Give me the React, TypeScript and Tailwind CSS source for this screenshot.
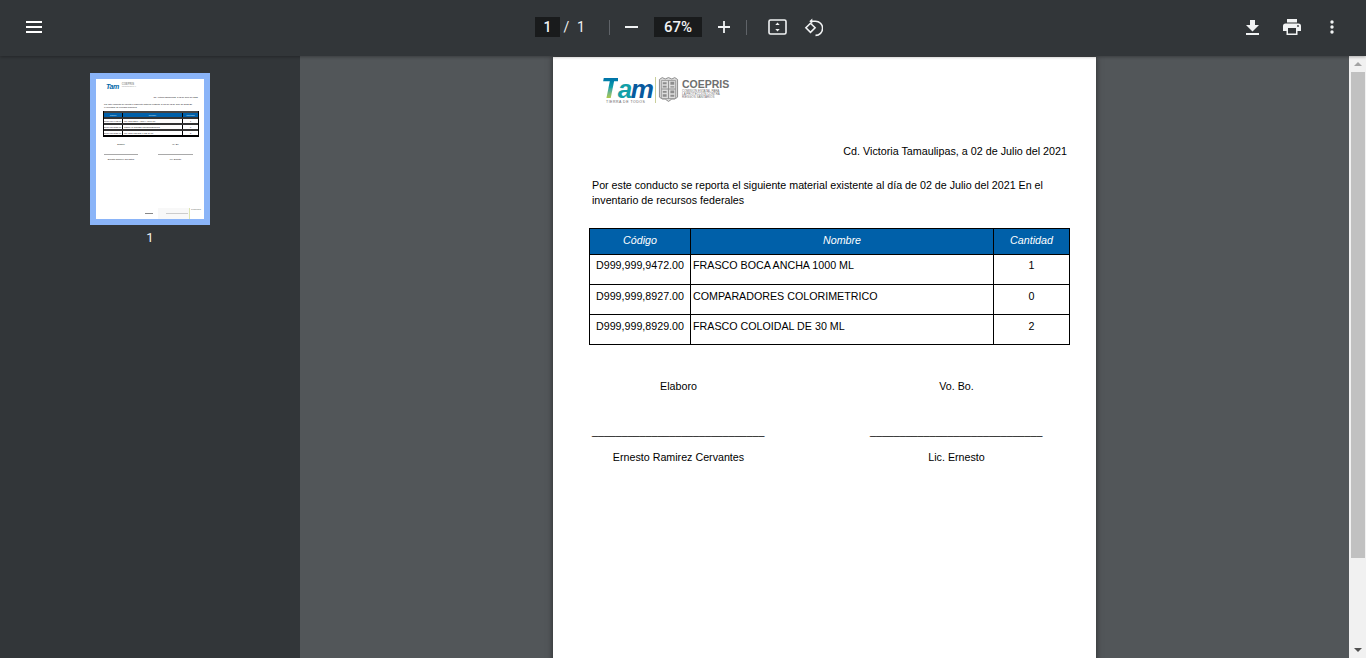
import React from 'react';

const rows = [
  { code: 'D999,999,9472.00', name: 'FRASCO BOCA ANCHA 1000 ML', qty: '1', pt: 'pt-[3px]' },
  { code: 'D999,999,8927.00', name: 'COMPARADORES COLORIMETRICO', qty: '0', pt: 'pt-[4px]' },
  { code: 'D999,999,8929.00', name: 'FRASCO COLOIDAL DE 30 ML', qty: '2', pt: 'pt-[4px]' },
];

function Shield({ className }: { className?: string }) {
  return (
    <svg viewBox="0 0 22 27" className={className}>
      <path d="M1.500 3l3-2 3 1.500 3.500-1.500 3.500 1.500 3-1.500 3 2v18.500l-3 2-3 0-3.500 2.500-3.500-2.500-3 0-3-2z" fill="#dcdcdc" stroke="#8a8a8a" strokeWidth="1" />
      <path d="M3.500 4h15v19h-15z" fill="none" stroke="#9a9a9a" strokeWidth="1" />
      <path d="M11 4v19M3.500 13h15" stroke="#8f8f8f" strokeWidth="1" />
      <path d="M5 6h4v2H5zM13 5.500h4v3h-4zM5 9.500h4v2H5zM13 10h4v1.500h-4zM5 15h4v2H5zM13 14.500h4v3h-4zM5 18.500h4v2.500H5zM13 19h4v2h-4z" fill="#8c8c8c" />
    </svg>
  );
}

function Logo() {
  return (
    <div className="flex items-start">
      <div className="w-[54px] h-[29px]">
        <div className="flex items-baseline h-[23px] italic font-bold leading-[23px] text-[30px] tracking-[-1.500px] font-['Liberation_Sans',sans-serif]">
          <span className="bg-gradient-to-b from-[#0067a8] via-[#12a0a8] to-[#b7cc2c] bg-clip-text text-transparent">T</span>
          <span className="text-[#12a0a8] text-[26px]">a</span>
          <span className="text-[#075a9e] text-[26px] tracking-normal">m</span>
        </div>
        <div className="pl-[5px] mt-[1px] text-[3.500px] leading-[4px] tracking-[0.5px] text-[#666] whitespace-nowrap font-['Liberation_Sans',sans-serif]">TIERRA DE TODOS</div>
      </div>
      <div className="w-px h-[26px] mt-px bg-[#c9cf9a]"></div>
      <Shield className="ml-[2px] w-[21px] h-[27px]" />
      <div className="ml-[3px] pt-[3px] font-['Liberation_Sans',sans-serif] text-[#6f6f6f]">
        <div className="text-[10.500px] leading-[10px] font-bold">COEPRIS</div>
        <div className="mt-[1px] text-[3px] leading-[3.200px] whitespace-nowrap">COMISIÓN ESTATAL PARA</div>
        <div className="text-[3px] leading-[3.200px] whitespace-nowrap">LA PROTECCIÓN CONTRA</div>
        <div className="text-[3px] leading-[3.200px] whitespace-nowrap">RIESGOS SANITARIOS</div>
      </div>
    </div>
  );
}

function MainPage() {
  return (
    <div className="w-[543px] h-[703px] shrink-0 bg-white shadow-[0_0_6px_rgba(0,0,0,0.5)] text-black font-['Liberation_Sans',sans-serif] text-[10.700px]">
      <div className="pl-[48px] pt-[19px] h-[87px]">
        <Logo />
      </div>
      <div className="pr-[29px] text-right text-[10.750px] leading-[14px] h-[21px]">Cd. Victoria Tamaulipas, a 02 de Julio del 2021</div>
      <p className="pl-[39px] pr-[40px] leading-[15px] mt-[13px]">
        Por este conducto se reporta el siguiente material existente al día de 02 de Julio del 2021 En el inventario de recursos federales
      </p>
      <div className="ml-[36px] mt-[20px] w-[481px] border border-black text-[10.700px]">
        <div className="grid grid-cols-[101px_303px_1fr] h-[25px] bg-[#0060a9] text-white italic text-center leading-[23px]">
          <div className="border-r border-black">Código</div>
          <div className="border-r border-black">Nombre</div>
          <div>Cantidad</div>
        </div>
        {rows.map((r) => (
          <div key={r.code} className="grid grid-cols-[101px_303px_1fr] border-t border-black h-[30px]">
            <div className={`border-r border-black text-center leading-[14px] ${r.pt}`}>{r.code}</div>
            <div className={`border-r border-black pl-[2px] leading-[14px] whitespace-nowrap ${r.pt}`}>{r.name}</div>
            <div className={`text-center leading-[14px] ${r.pt}`}>{r.qty}</div>
          </div>
        ))}
      </div>
      <div className="ml-[39px] mt-[34px] grid grid-cols-[173px_173px] gap-x-[105px] text-center leading-[14px]">
        <div>Elaboro</div>
        <div>Vo. Bo.</div>
        <div className="mt-[31px] whitespace-nowrap text-left">_____________________________</div>
        <div className="mt-[31px] whitespace-nowrap text-left">_____________________________</div>
        <div className="mt-[12px]">Ernesto Ramirez Cervantes</div>
        <div className="mt-[12px]">Lic. Ernesto</div>
      </div>
    </div>
  );
}

function ThumbRow({ code, name, qty }: { code: string; name: string; qty: string }) {
  return (
    <div className="grid grid-cols-[19px_60px_1fr] h-[6px] border-t-2 border-[#333] text-[2.100px] leading-[4px] text-[#222]">
      <div className="border-r border-black whitespace-nowrap">{code}</div>
      <div className="border-r border-black whitespace-nowrap pl-px">{name}</div>
      <div className="text-center">{qty}</div>
    </div>
  );
}

function Thumbnail() {
  return (
    <div className="w-[120px] h-[152px] border-[6px] border-[#8ab4f8] bg-white overflow-hidden font-['Liberation_Sans',sans-serif] text-[2.150px] leading-[3px] text-[#111]">
      <div className="h-[140px] flex flex-col">
        <div className="pl-[10px] pt-[4px] h-[16px] flex items-start">
          <span className="text-[7px] leading-[7px] font-bold italic text-[#0067a8] tracking-[-0.500px]">Tam</span>
          <div className="ml-[3px] text-[#999]">
            <div className="text-[2.800px] leading-[3px] font-bold">COEPRIS</div>
            <div className="text-[1.500px] leading-[1.500px]">COMISIÓN ESTATAL</div>
          </div>
        </div>
        <div className="pr-[6px] text-right h-[6px] pt-[1px]">Cd. Victoria Tamaulipas, a 02 de Julio del 2021</div>
        <div className="pl-[8px] pr-[11px] mt-[2px]">Por este conducto se reporta el siguiente material existente al día de 02 de Julio del 2021 En el inventario de recursos federales</div>
        <div className="ml-[7px] mt-[2px] w-[96px] border-x border-b-2 border-black">
          <div className="grid grid-cols-[19px_60px_1fr] h-[6px] border-t-2 border-[#444] bg-[#0060a9] text-[#cfe2f3] text-[2.100px] leading-[4px] text-center">
            <div className="border-r border-black">Código</div>
            <div className="border-r border-black">Nombre</div>
            <div>Cantidad</div>
          </div>
          {rows.map((r) => (
            <ThumbRow key={r.code} code={r.code} name={r.name} qty={r.qty} />
          ))}
        </div>
        <div className="ml-[8px] mt-[6px] grid grid-cols-[34px_35px] gap-x-[20px] text-center">
          <div>Elaboro</div>
          <div>Vo. Bo.</div>
          <div className="mt-[8px] h-px bg-[#aaa]"></div>
          <div className="mt-[8px] h-px bg-[#aaa]"></div>
          <div className="mt-[3px] whitespace-nowrap">Ernesto Ramirez Cervantes</div>
          <div className="mt-[3px]">Lic. Ernesto</div>
        </div>
        <div className="mt-auto flex items-center h-[11px] pl-[49px]">
          <div className="w-[8px] h-px bg-[#888]"></div>
          <div className="ml-[5px] w-[31px] h-[11px] bg-[#f8f8f8] flex items-center justify-end pr-px">
            <div className="w-[22px] h-px bg-[#ccc]"></div>
          </div>
          <div className="w-[15px] h-[11px] border-l border-[#dde5b0] pl-px text-[2.200px] leading-[2.400px] text-[#888] font-bold">COEPRIS</div>
        </div>
      </div>
    </div>
  );
}

function Toolbar() {
  return (
    <div className="relative z-10 h-14 pb-[2px] shrink-0 bg-[#323639] shadow-[0_1px_3px_rgba(0,0,0,0.3)] flex items-center justify-between text-[#f1f3f4] font-['Roboto',sans-serif]">
      <div className="w-[150px] pl-[26px] flex items-center">
        <svg width="16" height="12" viewBox="0 0 16 12" fill="#ffffff">
          <path d="M0 0h16v2H0zM0 5h16v2H0zM0 10h16v2H0z" />
        </svg>
      </div>
      <div className="flex items-center h-5 text-[14px]">
        <div className="w-[25px] h-5 bg-[#191b1c] text-center leading-5 font-medium">1</div>
        <span className="ml-[2px] w-[9px] text-center">/</span>
        <span className="ml-[6px] w-[8px] text-center">1</span>
        <div className="ml-[24px] w-px h-[15px] bg-[#5f6368]"></div>
        <svg className="ml-[15px]" width="13" height="2" viewBox="0 0 13 2" fill="#f1f3f4"><path d="M0 0h13v2H0z" /></svg>
        <div className="ml-[16px] w-[48px] h-5 bg-[#191b1c] text-center leading-5 text-[15px] font-medium">67%</div>
        <svg className="ml-[16px]" width="12" height="12" viewBox="0 0 12 12" fill="#f1f3f4"><path d="M5.100 0h1.800v5.100H12v1.800H6.900V12H5.100V6.900H0V5.100h5.100z" /></svg>
        <div className="ml-[16px] w-px h-[15px] bg-[#5f6368]"></div>
        <svg className="ml-[21px]" width="19" height="16" viewBox="0 0 19 16" fill="none">
          <rect x="1" y="1" width="17" height="14" rx="1.500" stroke="#f1f3f4" strokeWidth="1.600" />
          <path d="M9.500 3.500l2.200 2.600H7.300zM9.500 12.500l2.200-2.600H7.300z" fill="#f1f3f4" />
        </svg>
        <svg className="ml-[17px] mr-[8px]" width="19" height="19" viewBox="0 0 19 19" fill="none" stroke="#f1f3f4" strokeWidth="1.600">
          <path d="M7 3.200h4.500a6.300 6.300 0 0 1 0 14.200" />
          <path d="M6.500 5.300L1.900 9.800l4.600 4.600 4.600-4.600z" />
          <path d="M8.300 0.600L5.300 3.200l3 2.600z" fill="#f1f3f4" stroke="none" />
        </svg>
      </div>
      <div className="w-[150px] flex items-center justify-end">
        <svg width="13" height="15" viewBox="0 0 13 15" fill="#f1f3f4"><path d="M4 0h5v5h4L6.500 11.500 0 5h4zM0 13h13v2H0z" /></svg>
        <svg className="ml-[24px]" width="18" height="16" viewBox="0 0 18 16" fill="#f1f3f4">
          <path d="M4 0h10v3.500H4zM2.500 4.500h13A2.500 2.500 0 0 1 18 7v5h-3.500v4h-11v-4H0V7a2.500 2.500 0 0 1 2.500-2.500zM5 9v5.500h8V9z" fillRule="evenodd" />
          <circle cx="15" cy="7" r="0.900" fill="#323639" />
        </svg>
        <svg className="ml-[29px] mr-[32px]" width="4" height="14" viewBox="0 0 4 14" fill="#f1f3f4">
          <circle cx="2" cy="2" r="1.700" /><circle cx="2" cy="7" r="1.700" /><circle cx="2" cy="12" r="1.700" />
        </svg>
      </div>
    </div>
  );
}

export default function App() {
  return (
    <div className="h-[658px] w-[1366px] overflow-hidden flex flex-col bg-[#525659]">
      <Toolbar />
      <div className="flex-1 flex min-h-0">
        <aside className="w-[300px] shrink-0 bg-[#323639] flex flex-col items-center pt-[17px]">
          <Thumbnail />
          <div className="mt-[4px] text-[13px] leading-[18px] text-[#f1f3f4] font-['Roboto',sans-serif]">1</div>
        </aside>
        <main className="flex-1 flex justify-center pt-px overflow-hidden">
          <MainPage />
        </main>
        <div className="w-[17px] shrink-0 bg-[#f1f1f1] flex flex-col items-center">
          <div className="h-[16px] flex items-center justify-center">
            <div className="w-0 h-0 border-x-[4px] border-x-transparent border-b-[4px] border-b-[#a3a3a3]"></div>
          </div>
          <div className="w-[14px] h-[486px] bg-[#c1c1c1]"></div>
          <div className="mt-auto h-[16px] flex items-center justify-center">
            <div className="w-0 h-0 border-x-[4px] border-x-transparent border-t-[4px] border-t-[#505050]"></div>
          </div>
        </div>
      </div>
    </div>
  );
}
